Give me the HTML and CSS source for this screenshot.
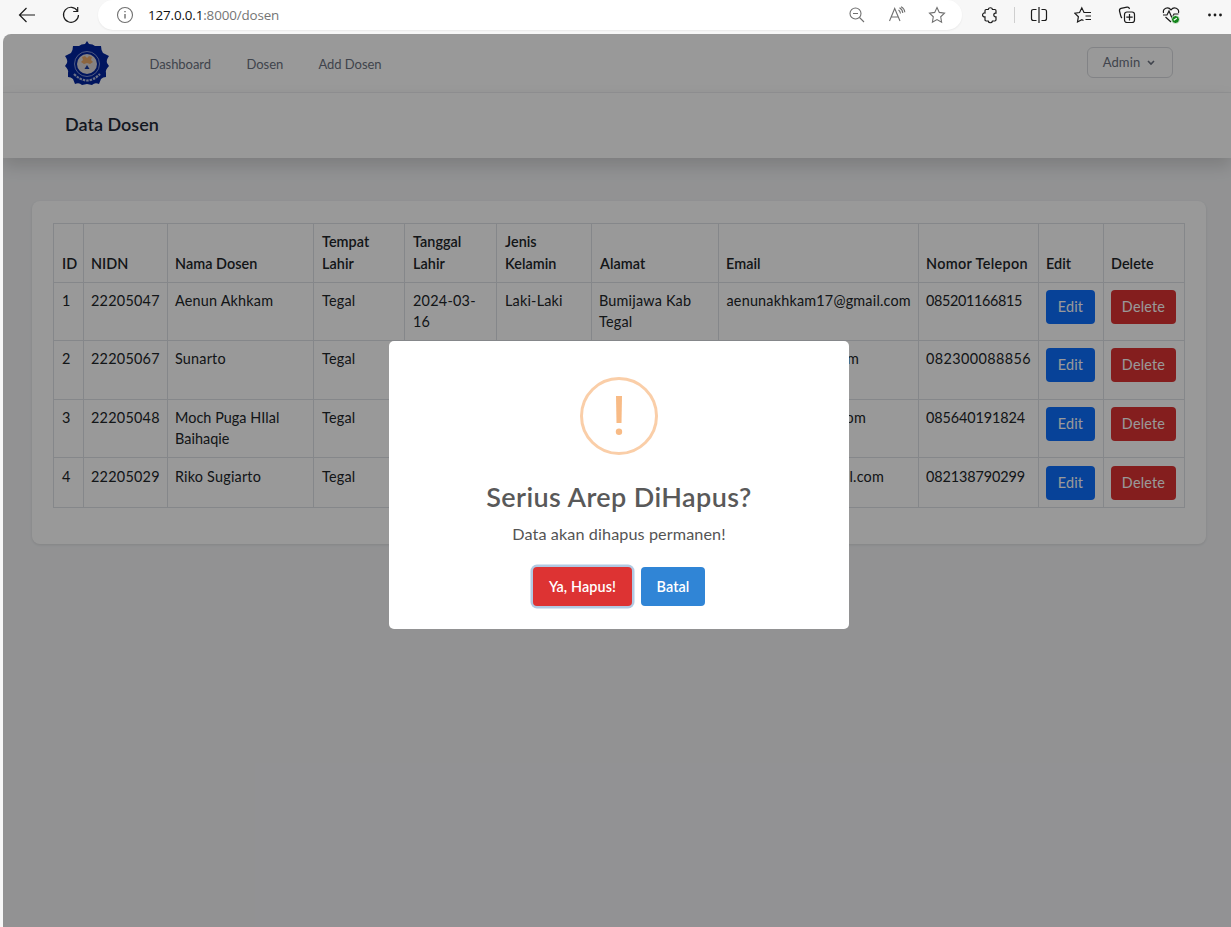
FILE: index.html
```html
<!DOCTYPE html>
<html lang="id">
<head>
<meta charset="utf-8">
<title>Data Dosen</title>
<link rel="stylesheet" href="styles.css">
</head>
<body>
<div class="toolbar">
  <svg class="ico back" width="18" height="18" viewBox="0 0 18 18"><path d="M17 9H1.500M8.500 2L1.500 9l7 7"/></svg>
  <svg class="ico reload" width="18" height="18" viewBox="0 0 18 18"><path d="M15.500 5A7.500 7.500 0 1 0 16.500 9M15.700 1v4.500h-4.500"/></svg>
  <div class="address">
    <svg class="ico grey" width="18" height="18" viewBox="0 0 18 18"><circle cx="9" cy="9" r="7.500"/><path d="M9 8v4.500M9 5v1.300" stroke-width="1.400"/></svg>
    <div class="url"><b>127.0.0.1</b>:8000/dosen</div>
    <svg class="ico grey zoomout" width="18" height="18" viewBox="0 0 18 18"><circle cx="7.500" cy="7.500" r="5.500"/><path d="M5 7.500h5M11.500 11.500l4.500 4.500"/></svg>
    <svg class="ico grey read" width="18" height="18" viewBox="0 0 18 18"><path d="M1.500 15L6.700 2.500 12 15M3.300 11h6.900M10.500 4q1.700 1 2 3.500M11.500 1.800q3 1.600 3.300 5.200M13 .8q3.500 1.700 3.800 5.500"/></svg>
    <svg class="ico grey star" width="18" height="18" viewBox="0 0 18 18"><path d="M9 1.500l2.300 4.900 5.200.7-3.800 3.700.9 5.400L9 13.600l-4.600 2.600.9-5.400L1.500 7.100l5.200-.7z"/></svg>
  </div>
  <div class="actions">
    <svg class="ico" width="18" height="18" viewBox="0 0 18 18"><path d="M5.200 3.500h2a2.200 2.200 0 0 1 4.300 0h2.300q1.200 0 1.200 1.200v2.500h-.8a1.900 1.900 0 0 0 0 3.700h.8v2.900q0 1.200-1.200 1.200h-2.300a2.200 2.200 0 0 1-4.300 0h-2Q4 15 4 13.800v-2.900a2 2 0 1 1 0-3.900V4.700q0-1.200 1.200-1.200z"/></svg>
    <i class="divider"></i>
    <svg class="ico" width="18" height="18" viewBox="0 0 18 18"><path d="M9 1v16M6.500 3.500h-3Q1.500 3.500 1.500 5.500v7q0 2 2 2h3M11.500 3.500h3q2 0 2 2v7q0 2-2 2h-3"/></svg>
    <svg class="ico" width="18" height="18" viewBox="0 0 18 18"><path d="M11 6.500H10L7.800 1.800 5.600 6.500l-4.800.7 3.600 3.500-.9 5.300 4.300-2.300 1.700.8M11 6.500h6M11.500 10H17M11.500 13.500H17"/></svg>
    <svg class="ico" width="18" height="18" viewBox="0 0 18 18"><rect x="6.500" y="6" width="10" height="10.500" rx="2.500"/><path d="M11.500 8v6.500M8.300 11.200h6.400M4 12Q3.200 11.500 2.800 10L1.500 5q-.4-2 1.500-2.600l6-1.200q2-.4 2.500 1.800"/></svg>
    <svg class="ico" width="18" height="18" viewBox="0 0 18 18"><path d="M1.500 7C.500 2.500 6 0 9 3.800 12 0 17.500 2.500 16.500 7M1 9h4l2-4 3 7 2-4h4.500M3.500 11L9 16"/><circle class="ok" cx="13.500" cy="13.500" r="4"/><path class="tick" d="M11.800 14.200l3-2"/></svg>
    <svg class="ico dots" width="18" height="18" viewBox="0 0 18 18"><circle cx="3.500" cy="9" r="1.400"/><circle cx="9" cy="9" r="1.400"/><circle cx="14.500" cy="9" r="1.400"/></svg>
  </div>
</div>

<div class="viewport">
  <nav class="nav">
    <svg class="logo" width="46" height="46" viewBox="-23 -23 46 46">
      <path class="seal" d="M0-23L2-20Q6-20 8-18L14-18Q14-14 16-11L22-8Q19-4 20-1L22 2Q18 6 19 9L19 13Q16 13 14 15L12 20Q8 18 5 21L0 20-5 21Q-8 18-12 20L-14 15Q-16 13-19 13L-19 9Q-18 6-22 2L-20-1Q-19-4-22-8L-16-11Q-14-14-14-18L-8-18Q-6-20-2-20Z"/>
      <circle class="ring" cx="0" cy="0" r="12.500"/>
      <circle class="face" cx="0" cy="0" r="10"/>
      <path class="petal" d="M-5-7l3-1 2 2 2-2 3 1-1 3 2 2-3 2-3-1-3 1-3-2 2-2z"/>
      <path class="drop" d="M0 1l2.500 4h-5z"/>
      <path class="motto" d="M-13 10Q0 23 13 10"/>
    </svg>
    <a class="link l1">Dashboard</a>
    <a class="link l2">Dosen</a>
    <a class="link l3">Add Dosen</a>
    <button class="admin">Admin <svg width="8" height="6" viewBox="0 0 8 6"><path d="M1 1l3 3 3-3"/></svg></button>
  </nav>
  <header class="heading"><h1>Data Dosen</h1></header>

  <main class="card">
    <table class="grid">
      <colgroup><col class="c30"><col class="c84"><col class="c146"><col class="c91"><col class="c92"><col class="c95"><col class="c127"><col class="c200"><col class="c120"><col class="c65"><col class="c81"></colgroup>
      <thead>
        <tr class="h59"><th>ID</th><th>NIDN</th><th>Nama Dosen</th><th class="in">Tempat<br>Lahir</th><th class="in">Tanggal<br>Lahir</th><th class="in">Jenis<br>Kelamin</th><th class="in">Alamat</th><th>Email</th><th class="phone">Nomor Telepon</th><th>Edit</th><th>Delete</th></tr>
      </thead>
      <tbody>
        <tr class="h58"><td>1</td><td class="num">22205047</td><td>Aenun Akhkam</td><td class="in">Tegal</td><td class="num in">2024-03-<br>16</td><td class="in">Laki-Laki</td><td>Bumijawa Kab Tegal</td><td class="mail">aenunakhkam17@gmail.com</td><td class="num n1">085201166815</td><td><button class="btn edit">Edit</button></td><td><button class="btn del">Delete</button></td></tr>
        <tr class="h59"><td>2</td><td class="num">22205067</td><td>Sunarto</td><td class="in">Tegal</td><td></td><td></td><td></td><td><span class="tail t2">@gmail.com</span></td><td class="num n2">082300088856</td><td><button class="btn edit">Edit</button></td><td><button class="btn del">Delete</button></td></tr>
        <tr class="h58"><td>3</td><td class="num">22205048</td><td class="name">Moch Puga HIlal Baihaqie</td><td class="in">Tegal</td><td></td><td></td><td></td><td><span class="tail t3">@gmail.com</span></td><td class="num n3">085640191824</td><td><button class="btn edit">Edit</button></td><td><button class="btn del">Delete</button></td></tr>
        <tr class="h50 last"><td>4</td><td class="num">22205029</td><td>Riko Sugiarto</td><td class="in">Tegal</td><td></td><td></td><td></td><td><span class="tail t4">@gmail.com</span></td><td class="num n3">082138790299</td><td><button class="btn edit">Edit</button></td><td><button class="btn del">Delete</button></td></tr>
      </tbody>
    </table>
  </main>

  <div class="overlay">
    <div class="dialog">
      <svg class="warn" width="78" height="78" viewBox="0 0 78 78"><circle class="warn-ring" cx="39" cy="39" r="37.500"/><path class="warn-mark" d="M36 19h6l-.5 27h-5z"/><circle class="warn-mark" cx="39" cy="54.700" r="3.200"/></svg>
      <h2 class="title">Serius Arep DiHapus?</h2>
      <p class="message">Data akan dihapus permanen!</p>
      <div class="choices"><button class="confirm">Ya, Hapus!</button><button class="cancel">Batal</button></div>
    </div>
  </div>
</div>
</body>
</html>
```
FILE: styles.css
```css
* { box-sizing: border-box; }
body { margin: 0; height: 927px; display: flex; flex-direction: column; overflow: hidden; background: #f7f7f7; font-family: Lato, "Open Sans", sans-serif; color: #212529; }
button { font-family: inherit; border: 0; margin: 0; padding: 0; }

.toolbar { height: 34px; flex: none; display: flex; align-items: flex-start; padding-left: 18px; }
.ico { fill: none; stroke: #1b1b1b; stroke-width: 1.2; flex: none; display: block; }
.ico.grey { stroke: #707070; stroke-width: 1.1; }
.back { margin-top: 6px; }
.reload { margin: 6px 0 0 26px; }
.address { height: 30px; width: 864px; margin-left: 18px; padding-left: 18px; background: #fff; border-radius: 15px; display: flex; align-items: center; box-shadow: 0 1px 2px rgba(0,0,0,.06); }
.url { width: 715px; padding-left: 14px; font: 13.4px "Open Sans", sans-serif; letter-spacing: -.14px; color: #757575; }
.url b { font-weight: 400; color: #111; }
.zoomout { margin-left: -1px; }
.read { margin-left: 22px; }
.star { margin-left: 22px; }
.actions { flex: 1; height: 30px; margin-left: 19px; display: flex; align-items: center; gap: 26px; }
.divider { width: 1px; height: 16px; background: #cfcfcf; margin: 0 -11px 0 -11px; }
.ok { fill: #12851a; stroke: #f7f7f7; stroke-width: .8; }
.tick { stroke: #fff; }
.dots { fill: #1b1b1b; stroke: none; }

.viewport { flex: 1; position: relative; overflow: hidden; margin-left: 3px; background: #f3f4f6; border-radius: 8px 0 0 0; }
.nav { height: 59px; display: flex; align-items: center; background: #fff; border-bottom: 1px solid #f0f1f3; padding: 0 58px 0 61px; }
.logo { display: block; margin-top: 1px; }
.seal { fill: #00239e; }
.ring { fill: none; stroke: #8495d8; stroke-width: 1; }
.face { fill: #ded9da; }
.petal { fill: #e9a868; }
.drop { fill: #173aa0; }
.motto { fill: none; stroke: #b3bde0; stroke-width: 2.2; stroke-dasharray: 2.5 1; }
.link { font-size: 13px; color: #6b7280; white-space: nowrap; padding-top: 1px; letter-spacing: -.05px; }
.l1 { margin-left: 39.5px; width: 97px; }
.l2 { width: 72px; }
.admin { margin: -2px 0 0 auto; width: 86px; height: 31px; border: 1px solid #d9dbdf; border-radius: 6px; background: #fff; color: #6b7280; font-size: 13px; letter-spacing: .1px; display: flex; align-items: center; justify-content: center; gap: 7px; padding-right: 2px; }
.admin svg { fill: none; stroke: #6b7280; stroke-width: 1.6; margin-top: 1px; }
.heading { height: 65px; padding: 21px 0 0 62px; background: #fff; box-shadow: 0 8px 16px rgba(0,0,0,.15); }
.heading h1 { margin: 0; font-size: 18px; line-height: 20px; font-weight: 600; color: #1f2937; }

.card { margin: 43px 25px 0 29px; height: 343px; padding: 22px 21px; background: #fff; border-radius: 8px; box-shadow: 0 1px 3px rgba(0,0,0,.1); }
.grid { table-layout: fixed; width: 1132px; border-collapse: separate; border-spacing: 0; border-left: 1px solid #dee2e6; border-top: 1px solid #dee2e6; font-size: 14.4px; line-height: 21.6px; letter-spacing: .2px; }
.grid th, .grid td { padding: 6.5px 7px 0 7px; border-right: 1px solid #dee2e6; border-bottom: 1px solid #dee2e6; text-align: left; vertical-align: top; }
.grid th { vertical-align: bottom; padding: 0 0 7.5px 7px; font-weight: 600; letter-spacing: .05px; }
.grid tr > :first-child, .grid .in { padding-left: 8px; padding-right: 0; }
.grid th.phone { letter-spacing: .35px; }
.grid .last td { padding-top: 7.5px; }
.c30 { width: 30px; } .c84 { width: 84px; } .c146 { width: 146px; } .c91 { width: 91px; } .c92 { width: 92px; } .c95 { width: 95px; }
.c127 { width: 127px; } .c200 { width: 200px; } .c120 { width: 120px; } .c65 { width: 65px; } .c81 { width: 81px; }
.h50 { height: 50px; } .h58 { height: 58px; } .h59 { height: 59px; }
.grid .num { letter-spacing: .25px; padding-right: 0; }
.grid .n1 { letter-spacing: -.35px; }
.grid .n2 { letter-spacing: .4px; }
.grid .n3 { letter-spacing: -.1px; }
.grid .name { letter-spacing: .05px; }
.grid .mail { padding-left: 7.5px; padding-right: 0; }
.tail { display: block; text-align: right; }
.t2 { width: 133px; } .t3 { width: 140px; } .t4 { width: 158px; }
.btn { display: block; height: 34px; margin-top: .5px; border-radius: 4px; color: #fff; font-size: 14.4px; letter-spacing: .2px; line-height: 32px; }
.edit { width: 49px; background: #0d6efd; }
.del { width: 65px; background: #dd3333; }

.overlay { position: absolute; inset: 0; background: rgba(0,0,0,.4); padding: 307px 0 0 386px; }
.dialog { width: 460px; height: 288px; background: #fff; border-radius: 5px; display: flex; flex-direction: column; align-items: center; padding-top: 36px; }
.warn { flex: none; }
.warn-ring { fill: none; stroke: #facea8; stroke-width: 3; }
.warn-mark { fill: #f8bb86; }
.title { margin: 25px 0 0; font-size: 27px; line-height: 34px; font-weight: 600; color: #595959; letter-spacing: .4px; white-space: nowrap; }
.message { margin: 9px 0 0; font-size: 16.2px; line-height: 22px; color: #545454; letter-spacing: .1px; white-space: nowrap; }
.choices { display: flex; gap: 9px; margin-top: 22px; }
.confirm, .cancel { height: 39px; border-radius: 4px; color: #fff; font-size: 14.4px; font-weight: 600; letter-spacing: .1px; padding-bottom: 1px; }
.confirm { width: 99px; background: #dd3333; box-shadow: 0 0 0 2.5px rgba(100,150,200,.5); }
.cancel { width: 64px; background: #3085d6; }
```
